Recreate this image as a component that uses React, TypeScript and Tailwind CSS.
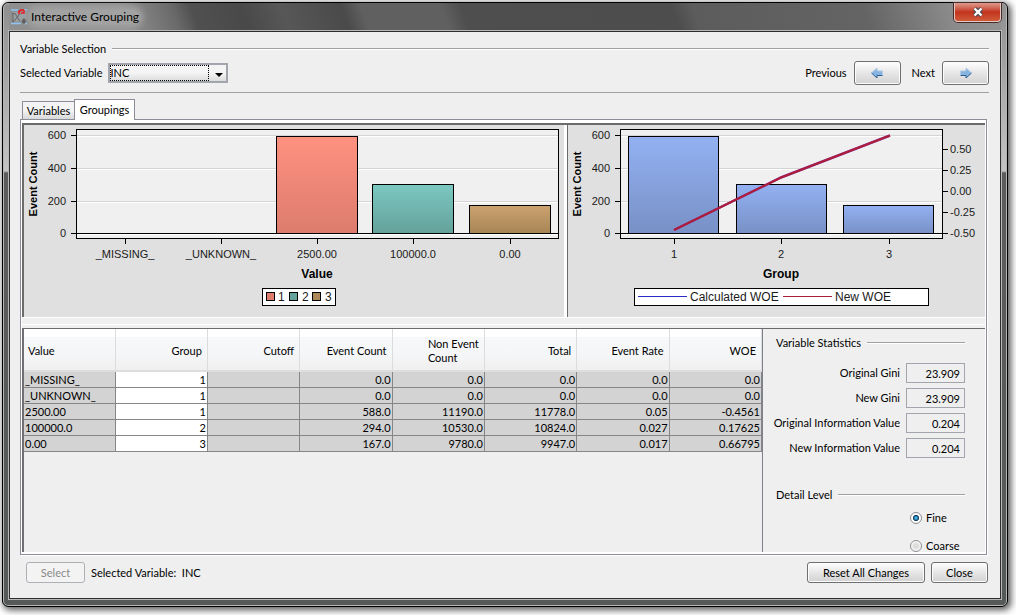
import { ReactNode } from "react";

const COLUMNS = ["Value", "Group", "Cutoff", "Event Count", "Non Event Count", "Total", "Event Rate", "WOE"];

const ROWS = [
  ["_MISSING_", "1", "", "0.0", "0.0", "0.0", "0.0", "0.0"],
  ["_UNKNOWN_", "1", "", "0.0", "0.0", "0.0", "0.0", "0.0"],
  ["2500.00", "1", "", "588.0", "11190.0", "11778.0", "0.05", "-0.4561"],
  ["100000.0", "2", "", "294.0", "10530.0", "10824.0", "0.027", "0.17625"],
  ["0.00", "3", "", "167.0", "9780.0", "9947.0", "0.017", "0.66795"],
];

const STATS = [
  { id: "original-gini", label: "Original Gini", value: "23.909" },
  { id: "new-gini", label: "New Gini", value: "23.909" },
  { id: "original-iv", label: "Original Information Value", value: "0.204" },
  { id: "new-iv", label: "New Information Value", value: "0.204" },
];

const Y_TICKS = [
  { label: "600", y: 10 },
  { label: "400", y: 43 },
  { label: "200", y: 76 },
  { label: "0", y: 108 },
];

const WOE_TICKS = [
  { label: "0.50", y: 24 },
  { label: "0.25", y: 45 },
  { label: "0.00", y: 66 },
  { label: "-0.25", y: 87 },
  { label: "-0.50", y: 108 },
];

const BUTTON =
  "rounded-[3px] border border-[#6f6f6f] bg-linear-to-b from-[#fafafa] from-10% via-[#e6e6e6] via-50% to-[#d2d2d2] shadow-[inset_0_0_0_1px_#fcfcfc]";

function GroupHeading({ children }: { children: ReactNode }) {
  return (
    <div className="flex items-center gap-[6px]">
      <h2>{children}</h2>
      <span className="h-[2px] flex-1 border-t border-[#a0a0a0] bg-white" />
    </div>
  );
}

interface Bar {
  x: number;
  y: number;
  fill: string;
}

interface PlotProps {
  left: number;
  right: number;
  barWidth: number;
  bars: Bar[];
  ticks: { label: string; x: number }[];
}

function Plot({ left, right, barWidth, bars, ticks }: PlotProps) {
  return (
    <>
      <rect x={left + 0.5} y="4.5" width={right - left} height="109" fill="#f0f0f0" />
      {Y_TICKS.map((t) => (
        <g key={t.label}>
          <path d={`M${left} ${t.y + 0.5}H${right}`} stroke="#d4d4d4" />
          <path d={`M${left} ${t.y + 1.5}H${right}`} stroke="#fff" />
          <path d={`M${left - 5} ${t.y + 0.5}H${left}`} stroke="#000" />
          <text x={left - 10} y={t.y + 4} textAnchor="end">
            {t.label}
          </text>
        </g>
      ))}
      {bars.map((b) => (
        <rect key={b.x} x={b.x + 0.5} y={b.y + 0.5} width={barWidth} height={108 - b.y} fill={b.fill} stroke="#000" />
      ))}
      <path d={`M${left} 108.5H${right}`} stroke="#000" />
      <rect x={left + 0.5} y="4.5" width={right - left} height="109" fill="none" stroke="#000" />
      {ticks.map((t) => (
        <g key={t.label}>
          <path d={`M${t.x + 0.5} 114V119`} stroke="#000" />
          <text x={t.x} y="133" textAnchor="middle">
            {t.label}
          </text>
        </g>
      ))}
      <text transform={`translate(${left - 39} 59) rotate(-90)`} textAnchor="middle" fontWeight="bold" fill="#000">
        Event Count
      </text>
    </>
  );
}

function Gradient({ id, from, to }: { id: string; from: string; to: string }) {
  return (
    <linearGradient id={id} x1="0" y1="0" x2="0" y2="1">
      <stop offset="0" stopColor={from} />
      <stop offset="1" stopColor={to} />
    </linearGradient>
  );
}

function ValueChart() {
  return (
    <svg viewBox="0 0 540 192" className="block h-[192px] w-full font-['Liberation_Sans',sans-serif] text-[11px]" fill="#1a1a1a" role="img" aria-label="Event count by value">
      <defs>
        <Gradient id="salmon" from="#ff9180" to="#dc7c6d" />
        <Gradient id="teal" from="#7bc8c1" to="#65a19b" />
        <Gradient id="tan" from="#cca370" to="#a78455" />
      </defs>
      <Plot
        left={52}
        right={534}
        barWidth={81}
        bars={[
          { x: 252, y: 11, fill: "url(#salmon)" },
          { x: 348, y: 59, fill: "url(#teal)" },
          { x: 445, y: 80, fill: "url(#tan)" },
        ]}
        ticks={[
          { label: "_MISSING_", x: 101 },
          { label: "_UNKNOWN_", x: 197 },
          { label: "2500.00", x: 293 },
          { label: "100000.0", x: 389 },
          { label: "0.00", x: 486 },
        ]}
      />
      <text x="293" y="153" textAnchor="middle" fontSize="12" fontWeight="bold" fill="#000">
        Value
      </text>
      <rect x="238.5" y="163.5" width="73" height="17" fill="#fff" stroke="#000" />
      <g fontSize="12">
        <rect x="242.5" y="167.5" width="8" height="8" fill="#de7d6e" stroke="#000" />
        <text x="254" y="176">1</text>
        <rect x="265.5" y="167.5" width="8" height="8" fill="#66a39d" stroke="#000" />
        <text x="278" y="176">2</text>
        <rect x="288.5" y="167.5" width="8" height="8" fill="#ad8859" stroke="#000" />
        <text x="301" y="176">3</text>
      </g>
    </svg>
  );
}

function GroupChart() {
  return (
    <svg viewBox="0 0 417 192" className="block h-[192px] w-full font-['Liberation_Sans',sans-serif] text-[11px]" fill="#1a1a1a" role="img" aria-label="Event count and WOE by group">
      <defs>
        <Gradient id="blue" from="#93b1f2" to="#7891c6" />
      </defs>
      <Plot
        left={52}
        right={374}
        barWidth={90}
        bars={[
          { x: 60, y: 11, fill: "url(#blue)" },
          { x: 168, y: 59, fill: "url(#blue)" },
          { x: 275, y: 80, fill: "url(#blue)" },
        ]}
        ticks={[
          { label: "1", x: 106 },
          { label: "2", x: 213 },
          { label: "3", x: 321 },
        ]}
      />
      {WOE_TICKS.map((t) => (
        <g key={t.label}>
          <path d={`M375 ${t.y + 0.5}H380`} stroke="#000" />
          <text x="382" y={t.y + 4}>
            {t.label}
          </text>
        </g>
      ))}
      <path d="M106 105L213 52.500L322 10.500" fill="none" stroke="#7a3fb0" strokeWidth="2.500" />
      <path d="M106 105L213 52.500L322 10.500" fill="none" stroke="#b01c38" strokeWidth="2" />
      <text x="213" y="153" textAnchor="middle" fontSize="12" fontWeight="bold" fill="#000">
        Group
      </text>
      <rect x="66.500" y="163.500" width="294" height="17" fill="#fff" stroke="#000" />
      <g fontSize="12">
        <path d="M70 171.500H119" stroke="#2a2ac8" />
        <text x="122" y="176">
          Calculated WOE
        </text>
        <path d="M215 171.500H264" stroke="#b01c38" />
        <text x="267" y="176">
          New WOE
        </text>
      </g>
    </svg>
  );
}

function Arrow({ flip }: { flip?: boolean }) {
  return (
    <svg viewBox="0 0 12 12" className={flip ? "size-3 -scale-x-100" : "size-3"} aria-hidden="true">
      <path d="M.500 4H6V1L11.500 6 6 11V8H.500Z" fill="#86b3df" />
      <path d="M.500 4H6V1L11.500 6" fill="none" stroke="#a9c8e6" />
      <path d="M.500 8.500H6V11L11.500 6" fill="none" stroke="#2d5f94" />
    </svg>
  );
}

function TitleIcon() {
  return (
    <svg viewBox="0 0 16 16" className="size-4" aria-hidden="true">
      <path d="M2 3h13v10H2z" fill="#9a9fa3" />
      <path d="M0 1h7M0 14.500h10M13 1h3M13 14.500h3" stroke="#8ec5f5" strokeWidth="1.500" />
      <path d="M1 4.500h3l5 8M9 4.500l-6 8H1M2 5v7" stroke="#666" fill="none" />
      <path d="M8 5V2.500L10 1h3M10 4h3V1" stroke="#f0141c" strokeWidth="1.600" fill="none" />
      <path d="M11 11l2-1.500 2 1.500v2l-2 2-2-2z" fill="#555" stroke="#777" />
    </svg>
  );
}

function TitleBar() {
  return (
    <header className="flex h-[28px] items-start justify-between bg-[linear-gradient(70deg,#8f8f8f_0%,#8f8f8f_12%,#6a6a6a_17%,#505050_19%,#494949_24%,#575757_28%,#4a4a4a_34%,#606060_36%,#606060_44%,#4e4e4e_46%,#4d4d4d_67%,#5c5c5c_69%,#646464_86%,#8c8c8c_95%,#929292_100%)] pl-[2px]">
      <div className="flex h-full items-center gap-1">
        <TitleIcon />
        <h1 className="rounded-full bg-[#a2a2a2] font-['Lato',sans-serif] text-[12px] text-black shadow-[0_0_6px_4px_#a2a2a2]">Interactive Grouping</h1>
      </div>
      <button
        type="button"
        aria-label="Close window"
        className="flex h-[19px] w-[47px] items-center justify-center rounded-b-[4px] border border-t-0 border-[#e0c8c4] bg-linear-to-b from-[#dd9a8e] from-0% via-[#c3321c] via-50% to-[#cf5a38] shadow-[0_0_0_1px_#4a2a26]"
      >
        <svg viewBox="0 0 12 10" className="h-[10px] w-3" aria-hidden="true">
          <path d="M2.500 1.500l7 7M9.500 1.500l-7 7" stroke="#4a4a55" strokeWidth="4.500" />
          <path d="M2.500 1.500l7 7M9.500 1.500l-7 7" stroke="#fff" strokeWidth="2.400" />
        </svg>
      </button>
    </header>
  );
}

function VariableSelection() {
  return (
    <section className="flex flex-col pt-[10px] pr-[11px] pl-[10px]">
      <GroupHeading>Variable Selection</GroupHeading>
      <div className="mt-[5px] flex h-6 items-center justify-between">
        <div className="flex items-center gap-[5px]">
          <label htmlFor="variable">Selected Variable</label>
          <div className="relative">
            <select
              id="variable"
              className="block h-5 w-[120px] appearance-none border-2 border-[#a3a5ad] bg-linear-to-b from-[#f4f4f4] from-50% to-[#dcdcdc] pl-px outline-none"
            >
              <option>INC</option>
            </select>
            <span className="pointer-events-none absolute inset-y-[2px] right-[19px] left-[2px] border border-dotted border-black" />
            <span className="pointer-events-none absolute top-[10px] right-[5px] border-x-4 border-t-4 border-x-transparent border-t-black" />
          </div>
        </div>
        <div className="flex items-center gap-[7px]">
          <label htmlFor="previous">Previous</label>
          <button id="previous" type="button" className={`${BUTTON} flex h-6 w-[47px] items-center justify-center`}>
            <Arrow flip />
          </button>
          <label htmlFor="next" className="ml-1">
            Next
          </label>
          <button id="next" type="button" className={`${BUTTON} flex h-6 w-[47px] items-center justify-center`}>
            <Arrow />
          </button>
        </div>
      </div>
      <hr className="mt-[7px] border-[#a0a0a0]" />
    </section>
  );
}

function Tabs() {
  return (
    <div role="tablist" className="relative z-10 -mb-px flex items-end pl-[2px]">
      <button type="button" role="tab" aria-selected="false" className="mb-px h-[18px] w-[53px] border border-b-0 border-[#8b8d98] bg-linear-to-b from-[#f4f4f4] from-50% to-[#d8d8d8]">
        Variables
      </button>
      <button type="button" role="tab" aria-selected="true" className="-ml-px h-[21px] w-[61px] border border-b-0 border-[#8b8d98] bg-white">
        Groupings
      </button>
    </div>
  );
}

function GroupingTable() {
  return (
    <div className="min-w-0 flex-1 border-r border-l-2 border-r-[#7c818c] border-l-[#6f6f74]">
      <table className="w-full table-fixed border-collapse">
        <thead>
          <tr className="h-[42px] bg-[linear-gradient(#fff_20%,#f6f8fa_20%,#f5f6f8_60%,#efefef)]">
            {COLUMNS.map((c, i) => (
              <th
                key={c}
                scope="col"
                className={`border-r border-b-2 border-r-[#dcdcdf] border-b-[#dedede] pt-[2px] pr-[5px] pl-[4px] align-middle leading-[14px] font-normal ${i === 0 ? "w-[91px] text-left" : "text-right"}`}
              >
                {c === "Non Event Count" ? <span className="inline-block w-[51px] text-left">{c}</span> : c}
              </th>
            ))}
          </tr>
        </thead>
        <tbody>
          {ROWS.map((row) => (
            <tr key={row[0]} className="h-4">
              {row.map((cell, i) => (
                <td
                  key={i}
                  className={`border-r border-b border-[#868686] px-px leading-[15px] ${i === 0 ? "text-left" : "text-right"} ${i === 1 ? "bg-white" : "bg-[#d3d3d3]"}`}
                >
                  {cell}
                </td>
              ))}
            </tr>
          ))}
        </tbody>
      </table>
    </div>
  );
}

function Radio({ label, checked }: { label: string; checked?: boolean }) {
  return (
    <label className="flex w-[55px] items-center gap-1 leading-[10px]">
      <input
        type="radio"
        name="detail"
        defaultChecked={checked}
        className="size-3 appearance-none rounded-full border border-[#8a8d92] bg-[radial-gradient(circle,#dcdcdc_30%,#fff_75%)] checked:bg-[radial-gradient(circle,#3fb2e8_0_12%,#123a5c_38%,#fff_50%)]"
      />
      {label}
    </label>
  );
}

function Statistics() {
  return (
    <aside className="w-[222px] shrink-0 overflow-hidden pt-[7px] pr-[20px] pl-[13px]">
      <GroupHeading>Variable Statistics</GroupHeading>
      <div className="mt-[13px] flex flex-col gap-[5px]">
        {STATS.map((s) => (
          <div key={s.id} className="flex items-center justify-end gap-[6px]">
            <label htmlFor={s.id} className="whitespace-nowrap">
              {s.label}
            </label>
            <input id={s.id} readOnly defaultValue={s.value} className="h-5 w-[59px] shrink-0 border border-[#a3a5ad] bg-transparent px-[4px] text-right" />
          </div>
        ))}
      </div>
      <div className="mt-[30px]">
        <GroupHeading>Detail Level</GroupHeading>
      </div>
      <div className="mt-[10px] flex flex-col items-end gap-4">
        <Radio label="Fine" checked />
        <Radio label="Coarse" />
      </div>
    </aside>
  );
}

export default function App() {
  return (
    <div className="flex h-screen bg-white pt-[2px] pr-2 pb-2 pl-[2px] font-[Lato,sans-serif] text-[11px] leading-[14px] text-black">
      <div className="flex min-w-0 flex-1 flex-col rounded-[6px] border border-black bg-[linear-gradient(#8f8f8f_0,#c4c4c4_168px,#5c5c5c_170px,#555957_100%)] px-[6px] pb-[7px] shadow-[2px_2px_7px_1px_#555,inset_0_0_0_1px_#b5b5b5]">
        <TitleBar />
        <main className="flex min-h-0 flex-1 flex-col border border-[#2e2e2e] bg-[#efefef] outline-1 outline-[#b8b8b8]">
          <VariableSelection />
          <div className="mt-[6px] flex min-h-0 flex-1 flex-col pr-[13px] pl-[10px]">
            <Tabs />
            <div className="flex min-h-0 flex-1 flex-col border border-[#8b8d98] bg-white pt-[3px] pr-px pb-[2px] pl-px shadow-[1px_1px_0_#fff]">
              <div className="grid shrink-0 grid-cols-[542fr_418fr] gap-[3px] border-t-2 border-[#6b6b6b]">
                <div className="border-l-2 border-[#6b6b6b] bg-[#e0e0e0]">
                  <ValueChart />
                </div>
                <div className="border-l border-[#6b6b6b] bg-[#e0e0e0]">
                  <GroupChart />
                </div>
              </div>
              <div className="mt-px h-[6px] shrink-0 bg-[#efefef]" />
              <div className="mt-px flex min-h-0 flex-1 flex-col bg-[#efefef] pt-[3px]">
                <div className="flex min-h-0 flex-1 overflow-hidden border-t border-[#6b6b6b]">
                  <GroupingTable />
                  <Statistics />
                </div>
              </div>
            </div>
          </div>
          <footer className="mt-[7px] mb-[15px] flex items-center gap-[6px] pr-[12px] pl-4">
            <button type="button" disabled className="h-[21px] w-[59px] rounded-[3px] border border-[#adb1b6] bg-[#f3f3f3] text-[#888]">
              Select
            </button>
            <span className="whitespace-pre">Selected Variable:  INC</span>
            <button type="button" className={`${BUTTON} ml-auto h-[21px] w-[118px]`}>
              Reset All Changes
            </button>
            <button type="button" className={`${BUTTON} h-[21px] w-[57px]`}>
              Close
            </button>
          </footer>
        </main>
      </div>
    </div>
  );
}
